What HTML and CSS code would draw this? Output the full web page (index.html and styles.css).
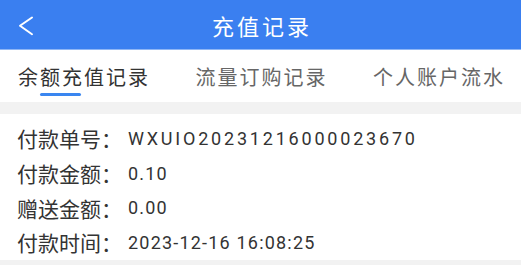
FILE: index.html
```html
<!DOCTYPE html>
<html lang="zh-CN">
<head>
<meta charset="utf-8">
<link rel="stylesheet" href="styles.css">
</head>
<body>
<div class="page">
  <header class="nav">
    <span class="back">
      <svg width="16" height="20" viewBox="0 0 16 20"><path d="M14 1.5 L2 9.8 L14 18.2" fill="none" stroke="#fff" stroke-width="2" stroke-linecap="round" stroke-linejoin="round"/></svg>
    </span>
    <h1 class="title">充值记录</h1>
  </header>
  <nav class="tabs">
    <div class="tab active">余额充值记录<span class="bar"></span></div>
    <div class="tab">流量订购记录</div>
    <div class="tab">个人账户流水</div>
  </nav>
  <section class="card">
    <div class="row"><span class="label">付款单号：</span><span class="val v1">WXUIO20231216000023670</span></div>
    <div class="row"><span class="label">付款金额：</span><span class="val">0.10</span></div>
    <div class="row"><span class="label">赠送金额：</span><span class="val">0.00</span></div>
    <div class="row"><span class="label">付款时间：</span><span class="val">2023-12-16 16:08:25</span></div>
  </section>
</div>
</body>
</html>
```
FILE: styles.css
```css
* { box-sizing: border-box; margin: 0; padding: 0; }
html, body { width: 521px; height: 265px; overflow: hidden; }
body { background: #f2f2f2; font-family: "Noto Sans CJK SC", "Noto Sans", sans-serif; color: #333; }
.page { display: flex; flex-direction: column; }
.nav {
  height: 50px; background: #3a7ff0; display: flex; align-items: center; justify-content: center;
  position: relative; border-bottom: 1px solid #8fb6f5;
}
.back { position: absolute; left: 18px; top: 16px; width: 16px; height: 20px; display: flex; }
.title { color: #fff; font-weight: 400; font-size: 22px; letter-spacing: 3px; margin-left: 3px; line-height: 1; }
.tabs {
  height: 52px; background: #fff; display: flex; justify-content: space-between;
  padding: 0 16px 0 18px; align-items: center;
}
.tab { position: relative; font-size: 20px; letter-spacing: 2px; color: #666; line-height: 1; padding-top: 2px; }
.tab.active { color: #333; }
.bar { position: absolute; left: 22px; top: 28px; width: 41px; height: 3px; border-radius: 2px; background: #3a86f0; }
.card { margin-top: 12px; background: #fff; padding: 7px 0 0 17px; height: 146px; }
.row { height: 34.7px; display: flex; align-items: center; font-size: 21px; }
.label { width: 111px; }
.val { font-family: Roboto, "Noto Sans", sans-serif; font-size: 18px; letter-spacing: 1.2px; color: #333; }
.val.v1 { letter-spacing: 2.8px; }
```
